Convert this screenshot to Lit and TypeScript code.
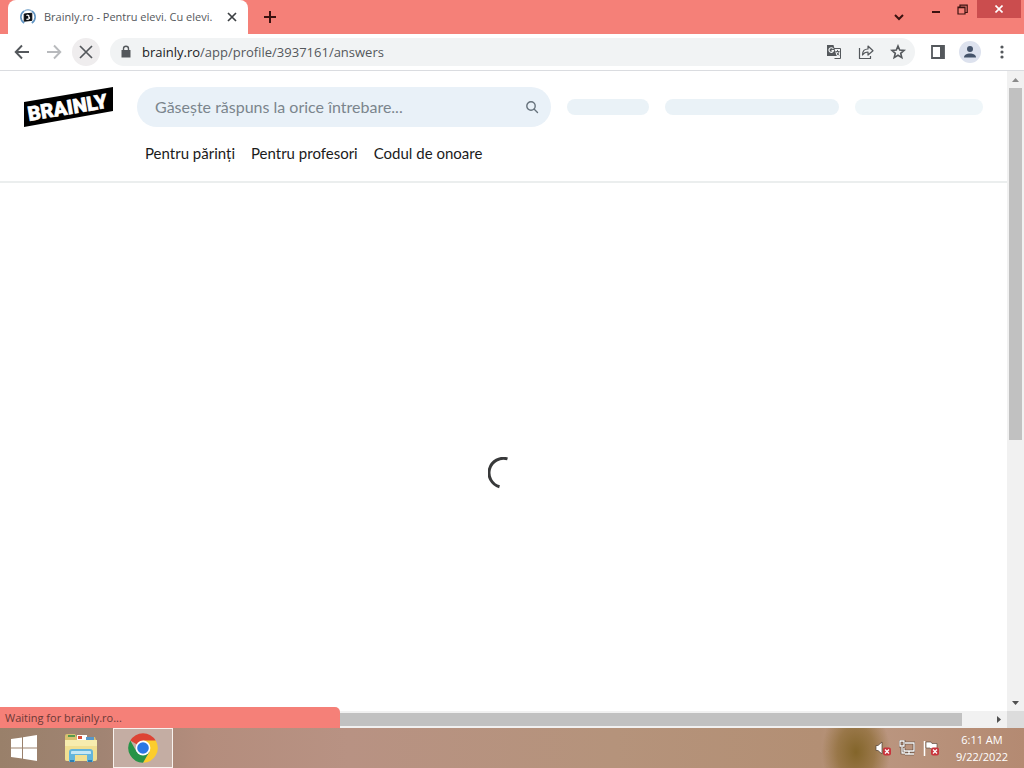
import { LitElement, html, css, svg } from "lit";
import { customElement } from "lit/decorators.js";

@customElement("browser-chrome")
class BrowserChrome extends LitElement {
  static styles = css`
    :host { display: block; font-family: "Open Sans", "Noto Sans", sans-serif; }
    button { border: 0; padding: 0; margin: 0; background: none; font: inherit; color: #54585c; display: grid; place-items: center; }
    svg { display: block; }
    .strip { height: 34px; background: #f58078; display: flex; }
    .tab { width: 240px; box-sizing: border-box; margin-left: 8px; padding: 0 8px 0 12px; background: #fff; border-radius: 8px 8px 0 0; display: flex; align-items: center; }
    .title { flex: 1; margin-left: 8px; font-size: 11px; line-height: 16px; color: #54585c; white-space: nowrap; }
    .tab button { width: 16px; height: 16px; color: #3c4043; }
    .new { width: 44px; color: #3a1210; }
    .space { flex: 1; }
    .win { display: flex; align-items: flex-start; margin-right: 3px; }
    .win button { color: #3a1210; height: 18px; width: 26px; }
    .win .search { width: 48px; height: 34px; }
    .win .close { width: 44px; margin-left: 2px; background: #cb4d4e; color: #fff; }
    .bar { height: 36px; background: #fff; border-bottom: 1px solid #dadce0; display: flex; align-items: center; padding: 0 8px; gap: 4px; }
    .bar button { width: 28px; height: 28px; border-radius: 50%; flex: none; }
    .bar .stop { background: #efedee; }
    .omni { flex: 1; height: 28px; margin: 0 5px 0 6px; border-radius: 14px; background: #f1f3f4; display: flex; align-items: center; padding: 0 3px 0 10px; gap: 4px; color: #54585c; }
    .url { flex: 1; margin-left: 6px; font-size: 13px; line-height: 20px; white-space: nowrap; }
    .url b { font-weight: 400; color: #202124; }
    .bar .me { background: #dde2ee; color: #45546b; width: 22px; height: 22px; margin: 0 3px; }
  `;
  render() {
    return html`
      <div class="strip">
        <div class="tab">
          <svg width="16" height="16" viewBox="0 0 16 16" fill="none">
            <path d="M4.200 14A7 7 0 0 1 4 2.200M12 2.200a7 7 0 0 1-.2 11.800" stroke="#5f93c2" stroke-width="1.600" />
            <path d="M4 2.200a7 7 0 0 1 8 0" stroke="#8fb4d4" stroke-width="1.400" />
            <path d="M4.200 5 11.800 4.200v7.200l-7.600.8Z" fill="#0b0f14" stroke="#0b0f14" stroke-linejoin="round" />
            <path d="M6.400 6.500c2-1 3.600.6 1.800 1.700 2.200-.2 2 2.200-1.800 2.200" stroke="#fff" stroke-width="1.200" />
          </svg>
          <span class="title">Brainly.ro - Pentru elevi. Cu elevi.</span>
          <button aria-label="Close tab"><svg width="10" height="10" viewBox="0 0 10 10" stroke="currentColor" stroke-width="1.700"><path d="m1 1 8 8M9 1 1 9" /></svg></button>
        </div>
        <button class="new" aria-label="New tab"><svg width="12" height="12" viewBox="0 0 12 12" stroke="currentColor" stroke-width="2"><path d="M6 0v12M0 6h12" /></svg></button>
        <div class="space"></div>
        <div class="win">
          <button class="search" aria-label="Search tabs"><svg width="10" height="7" viewBox="0 0 10 7" fill="none" stroke="currentColor" stroke-width="2"><path d="m1 1 4 4 4-4" /></svg></button>
          <button aria-label="Minimize"><svg width="9" height="12" viewBox="0 0 9 12"><path d="M0 8h8v2H0z" fill="currentColor" /></svg></button>
          <button aria-label="Restore"><svg width="11" height="11" viewBox="0 0 11 11" fill="none" stroke="currentColor" stroke-width="1.200"><path d="M1 3h7v7H1zM1 3.700h7M3 2.500V1h7.200v7.500H8.500M3 1.200h7" /></svg></button>
          <button class="close" aria-label="Close"><svg width="8" height="8" viewBox="0 0 8 8" stroke="currentColor" stroke-width="1.600"><path d="m.5.5 7 7M7.500.5l-7 7" /></svg></button>
        </div>
      </div>
      <div class="bar">
        <button aria-label="Back"><svg width="16" height="16" viewBox="0 0 16 16" fill="none" stroke="currentColor" stroke-width="1.900"><path d="M15 8H2M8 1.500 1.700 8 8 14.500" /></svg></button>
        <button aria-label="Forward" disabled><svg width="16" height="16" viewBox="0 0 16 16" fill="none" stroke="#b8babd" stroke-width="1.900"><path d="M1 8h13M8 1.500 14.300 8 8 14.500" /></svg></button>
        <button class="stop" aria-label="Stop"><svg width="14" height="14" viewBox="0 0 14 14" stroke="currentColor" stroke-width="1.700"><path d="m1 1 12 12M13 1 1 13" /></svg></button>
        <div class="omni">
          <svg width="12" height="14" viewBox="0 0 12 14"><path d="M1.500 5h9v7.500h-9z" fill="currentColor" /><path d="M3.500 5.500V3.700a2.500 2.500 0 0 1 5 0v1.800" fill="none" stroke="currentColor" stroke-width="1.400" /></svg>
          <span class="url"><b>brainly.ro</b>/app/profile/3937161/answers</span>
          <button aria-label="Translate"><svg width="16" height="16" viewBox="0 0 16 16" fill="none"><path d="M6.500 4.500h8v10H8.500" stroke="currentColor" /><path d="M1 1h6.500L10.500 12H1z" fill="currentColor" /><path d="M7.300 4.900A2.300 2.300 0 1 0 7.500 6.700H5.500" stroke="#f1f3f4" stroke-width="1.200" /><path d="M9.500 7.500h4M11.500 6v1.500M13 7.500c-.4 2-1.500 3.200-2.500 4M10.800 8.500l2.400 3" stroke="currentColor" stroke-width=".9" /></svg></button>
          <button aria-label="Share"><svg width="16" height="16" viewBox="0 0 16 16" fill="none" stroke="currentColor" stroke-width="1.200" stroke-linejoin="round"><path d="M1.500 4v10.500h11V12" /><path d="M4.500 11C4.500 7 6.500 5 10 5V2l5 4.700-5 4.300V8C7.500 8 5.800 9 4.500 11Z" /></svg></button>
          <button aria-label="Bookmark"><svg width="16" height="16" viewBox="0 0 16 16" fill="none" stroke="currentColor" stroke-width="1.600"><path d="m8 2 1.700 4.100 4.400.3-3.400 2.900 1.100 4.300L8 11.300l-3.800 2.300 1.100-4.300-3.400-2.900 4.400-.3Z" /></svg></button>
        </div>
        <button aria-label="Side panel"><svg width="14" height="14" viewBox="0 0 14 14"><path d="M1 1h12v12H1z" fill="none" stroke="currentColor" stroke-width="1.800" /><path d="M9 1h4v12H9z" fill="currentColor" /></svg></button>
        <button class="me" aria-label="Profile"><svg width="14" height="14" viewBox="0 0 14 14" fill="currentColor"><circle cx="7" cy="4" r="3" /><path d="M1 12.500c0-5.300 12-5.300 12 0Z" /></svg></button>
        <button aria-label="Menu"><svg width="4" height="14" viewBox="0 0 4 14" fill="currentColor"><circle cx="2" cy="2" r="1.600" /><circle cx="2" cy="7" r="1.600" /><circle cx="2" cy="12" r="1.600" /></svg></button>
      </div>
    `;
  }
}

@customElement("brainly-page")
class BrainlyPage extends LitElement {
  static styles = css`
    :host { display: flex; flex-direction: column; background: #fff; font-family: Lato, "Open Sans", sans-serif; overflow: hidden; }
    header { border-bottom: 2px solid #ebeeee; padding: 16px 24px 16px; }
    .top { display: grid; grid-template-columns: 97px 414fr 82fr 174fr 128fr; column-gap: 16px; align-items: center; }
    .top svg { display: block; }
    .logo { width: 89px; height: 40px; }
    form { min-width: 0; height: 40px; border-radius: 20px; background: #e9f1f8; display: flex; align-items: center; padding: 0 12px 0 18px; box-sizing: border-box; }
    input { flex: 1; min-width: 0; border: 0; outline: 0; background: none; padding: 0; font: 400 16px/24px Lato, sans-serif; color: #3c4650; }
    input::placeholder { color: #7b858d; opacity: 1; }
    form button { border: 0; padding: 0; background: none; width: 14px; height: 14px; color: #66727c; }
    .bone { height: 16px; border-radius: 8px; background: #eaf2f7; }
    .faint { background: #eff6f9; }
    nav { display: flex; gap: 16px; margin: 14px 0 0 121px; }
    nav a { color: #1b1b1b; text-decoration: none; font-size: 15px; line-height: 24px; white-space: nowrap; }
    main { flex: 1; display: flex; justify-content: center; padding-top: 274px; }
    .word { font: 900 20px Roboto, sans-serif; fill: #fff; stroke: #fff; stroke-width: .6px; }
  `;
  render() {
    return html`
      <header>
        <div class="top">
          <a class="logo" href="#" aria-label="Brainly"><svg width="89" height="40" viewBox="0 0 89 40"><path d="M0 15 89 0v24L0 40Z" />${svg`<text class="word" x="5" y="34" transform="rotate(-9.500 5 34)">BRAINLY</text>`}</svg></a>
          <form role="search">
            <input aria-label="Search" placeholder="Găsește răspuns la orice întrebare..." />
            <button type="button" aria-label="Search"><svg width="14" height="14" viewBox="0 0 14 14" fill="none" stroke="currentColor" stroke-width="1.400"><circle cx="6" cy="6" r="4.200" /><path d="m9 9 3.500 3.500" stroke-linecap="round" /></svg></button>
          </form>
          <div class="bone"></div><div class="bone"></div><div class="bone faint"></div>
        </div>
        <nav><a href="#">Pentru părinți</a><a href="#">Pentru profesori</a><a href="#">Codul de onoare</a></nav>
      </header>
      <main>
        <svg width="32" height="32" viewBox="0 0 32 32" fill="none"><path d="M19.500 1.900A14.500 14.500 0 0 0 11.500 29.800" stroke="#38393a" stroke-width="3" /></svg>
      </main>
    `;
  }
}

@customElement("task-bar")
class TaskBar extends LitElement {
  static styles = css`
    :host { display: flex; align-items: center; height: 40px; color: #fff; font-family: "Open Sans", "Noto Sans", sans-serif;
      background: radial-gradient(ellipse 34px 48px at 856px 24px, #83652a 0%, #8a6930aa 55%, #83652a00 100%), linear-gradient(90deg, #99806a 0, #a18473 10%, #b48d7d 20%, #b89283 34%, #b5937b 60%, #b38f74 80%, #bb9781 84%, #b48a72 100%); }
    svg { display: block; }
    button { border: 0; padding: 0; background: none; width: 48px; height: 40px; display: grid; place-items: center; color: inherit; font: inherit; }
    .files { width: 65px; }
    .chrome { box-sizing: border-box; width: 60px; border: 1px solid #f8f2ee; background: #c4ada3; }
    .tray { margin-left: auto; display: flex; align-items: center; gap: 8px; padding-right: 16px; }
    .tray button { width: 16px; }
    .tray .clock { width: auto; margin-left: 9px; font-size: 11px; line-height: 17px; }
  `;
  render() {
    const bad = svg`<rect x="8" y="7.500" width="8" height="8" rx="2" fill="#c8343c" /><path d="m10 9.500 4 4m0-4-4 4" stroke="#fff" stroke-width="1.300" />`;
    return html`
      <button aria-label="Start"><svg width="28" height="26" viewBox="0 0 28 26" fill="#fff"><path d="M1 4 12 2.400v10H1ZM13 2.200 27 0v12.400H13ZM1 13.500h11v10L1 22ZM13 13.500h14V26l-14-2.300Z" /></svg></button>
      <button class="files" aria-label="File Explorer"><svg width="34" height="30" viewBox="0 0 34 30">
        <path d="M1 3q0-2 2-2h8l2 3h18l1 3v19q0 2-2 2H3q-2 0-2-2Z" fill="#d9c170" /><path d="M13 2h10v5H13Z" fill="#fff" /><path d="M4 2h7v2H4Z" fill="#579a4c" /><path d="M14 3h4v3h-4Z" fill="#d74c38" /><path d="M22 4h8v3h-8Z" fill="#5996c6" />
        <path d="M1 7h32v19q0 2-2 2H3q-2 0-2-2Z" fill="#f0df92" /><path d="M1 7h32v6H1Z" fill="#f7ecae" />
        <path d="M5 29V19q0-3 3-3h18q3 0 3 3v10h-6v-7H11v7Z" fill="#63b5dc" /><path d="M7 19q0-1 1-1h18q1 0 1 1v2H7Z" fill="#c4e7f5" /><path d="M6 28h4M24 28h4" stroke="#2d7fb4" stroke-width="2" />
      </svg></button>
      <button class="chrome" aria-label="Google Chrome"><svg width="30" height="30" viewBox="0 0 30 30">
        <path d="M15 15 2.300 7.600A14.700 14.700 0 0 1 27.700 7.600Z" fill="#dd4434" /><path d="M27.700 7.600H15v7.400l6.400 3.700L15 29.700A14.700 14.700 0 0 0 27.700 7.600Z" fill="#fccd2c" /><path d="M2.300 7.600 8.600 18.700 15 15l6.400 3.700L15 29.700A14.700 14.700 0 0 1 2.300 7.600Z" fill="#279347" /><circle cx="15" cy="15" r="7.400" fill="#fff" /><circle cx="15" cy="15" r="5.800" fill="#2b77e4" />
      </svg></button>
      <div class="tray">
        <button aria-label="Volume"><svg width="16" height="16" viewBox="0 0 16 16"><path d="M1 5.500h2L7 2v12l-4-3.500H1Z" fill="#fff" stroke="#4e3c31" stroke-width=".7" />${bad}</svg></button>
        <button aria-label="Network"><svg width="16" height="16" viewBox="0 0 16 16" fill="none"><path d="M6 3h9v8H5V8M10 11v3M6 14h9M3 7v6h3M1 1h4v5H1z" stroke="#4e3c31" stroke-width="2.600" /><path d="M6 3h9v8H5V8M10 11v3M6 14h9M3 7v6h3M1 1h4v5H1z" stroke="#fff" stroke-width="1.300" /></svg></button>
        <button aria-label="Action Center"><svg width="16" height="16" viewBox="0 0 16 16"><path d="M1.500 1v15" stroke="#fff" stroke-width="1.500" /><path d="M3 2h5l1 1.500h5V9H8L7 8H3Z" fill="#fff" stroke="#4e3c31" stroke-width=".6" />${bad}</svg></button>
        <button class="clock"><span>6:11 AM<br />9/22/2022</span></button>
      </div>
    `;
  }
}

@customElement("app-root")
class AppRoot extends LitElement {
  static styles = css`
    :host { display: flex; flex-direction: column; height: 100vh; overflow: hidden; background: #fff; }
    .view { flex: 1; min-height: 0; position: relative; display: grid; grid-template: minmax(0, 1fr) 17px / minmax(0, 1fr) 17px; }
    .v, .h { background: #f1f1f1; display: flex; align-items: center; color: #505050; }
    .v { flex-direction: column; }
    .v svg, .h svg { flex: none; display: block; }
    .thumb { background: #c1c1c1; }
    .v .thumb { width: 13px; flex: 352 1 0; }
    .v .rest { flex: 254 1 0; }
    .h .thumb { height: 13px; flex: 945 1 0; }
    .h .rest { flex: 28 1 0; }
    .corner { background: #dcdcdc; }
    .status { position: absolute; left: 0; bottom: 0; width: 340px; box-sizing: border-box; padding: 0 5px; border-radius: 0 5px 0 0; background: #f58078; color: #6b3936; font: 11px/21px "Open Sans", "Noto Sans", sans-serif; }
  `;
  render() {
    return html`
      <browser-chrome></browser-chrome>
      <div class="view">
        <brainly-page></brainly-page>
        <div class="v">
          <svg width="17" height="17" viewBox="0 0 17 17"><path d="M5 11h7L8.500 7Z" fill="#8b8b8b" /></svg>
          <div class="thumb"></div><div class="rest"></div>
          <svg width="17" height="17" viewBox="0 0 17 17"><path d="M5 7h7l-3.500 4Z" fill="currentColor" /></svg>
        </div>
        <div class="h">
          <svg width="17" height="17" viewBox="0 0 17 17"><path d="M11 5v7L7 8.500Z" fill="#a3a3a3" /></svg>
          <div class="thumb"></div><div class="rest"></div>
          <svg width="17" height="17" viewBox="0 0 17 17"><path d="M7 5v7l4-3.500Z" fill="currentColor" /></svg>
        </div>
        <div class="corner"></div>
        <div class="status" role="status">Waiting for brainly.ro...</div>
      </div>
      <task-bar></task-bar>
    `;
  }
}
